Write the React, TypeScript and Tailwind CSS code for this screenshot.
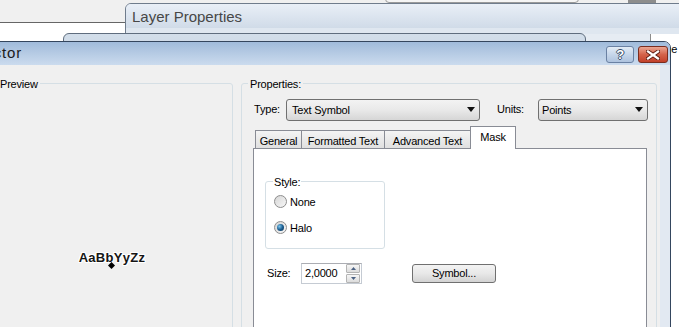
import type { ReactNode } from 'react'

function Combo({ className, children }: { className: string; children: ReactNode }) {
  return (
    <div
      className={`flex h-[22px] items-center rounded-[3px] border border-[#707070] bg-gradient-to-b from-[#f3f3f3] via-[#e9e9e9] to-[#d6d6d6] ${className}`}
    >
      <span className="flex-1 leading-[14px]">{children}</span>
      <svg width="8" height="5" viewBox="0 0 8 5" className="mr-[4px]">
        <path d="M0 0h8L4 5z" fill="#111" />
      </svg>
    </div>
  )
}

function Radio({ checked, label }: { checked?: boolean; label: string }) {
  return (
    <div className="flex h-[16px] items-center">
      <span className="ml-[1px] flex h-[13px] w-[13px] items-center justify-center rounded-full border border-[#8d8d8d] bg-gradient-to-br from-[#d6d6d6] to-[#f7f7f7]">
        {checked && (
          <span className="h-[7px] w-[7px] rounded-full bg-[radial-gradient(circle_at_35%_35%,#7cc6ee,#1d5f92_50%,#0b2f4f)]" />
        )}
      </span>
      <span className="ml-[3px] leading-[14px]">{label}</span>
    </div>
  )
}

function SpinButton({ up }: { up?: boolean }) {
  return (
    <div className="flex h-[9px] items-center justify-center rounded-[1px] border border-[#b4b4b4] bg-gradient-to-b from-[#f6f6f6] to-[#dcdcdc]">
      <svg width="5" height="3" viewBox="0 0 5 3">
        <path d={up ? 'M0 3h5L2.5 0z' : 'M0 0h5L2.5 3z'} fill="#4b6183" />
      </svg>
    </div>
  )
}

export default function App() {
  return (
    <div className="relative h-[327px] w-[679px] overflow-hidden bg-white font-['Liberation_Sans',Arial,sans-serif] text-[11px] tracking-[-0.2px] text-black">
      {/* desktop behind the dialogs */}
      <div className="h-[23px] border-b border-[#666] bg-[#f0f0f0]" />
      <div className="absolute left-[385px] top-[-6px] h-[9px] w-[194px] rounded-b-[4px] border border-[#9a9a9a] bg-[#f5f5f5]" />
      <div className="absolute left-[628px] top-0 h-[3px] w-[28px] bg-[#8d8d8d]" />

      {/* Layer Properties window */}
      <div className="absolute left-[125px] top-[3px] flex h-[340px] w-[600px] flex-col rounded-tl-[6px] border border-[#6f7c8c] bg-[#dfe7f0]">
        <div className="h-[24px] rounded-tl-[5px] bg-gradient-to-b from-[#e9eff7] to-[#d0dbe8] pl-[6px] pt-[4px] text-[15px] leading-[17px] tracking-normal text-[#474747]">
          Layer Properties
        </div>
        <div className="h-[6px] bg-[#dfe7f0]" />
        <div className="flex flex-1">
          <div className="w-[524px] bg-[#e6ecf3]" />
          <div className="flex-1 border-l border-[#8c8c8c] bg-white pl-[3px] pt-[9px] leading-[12px]">Time</div>
        </div>
      </div>

      {/* another window */}
      <div className="absolute left-[63px] top-[33px] h-[40px] w-[523px] rounded-t-[6px] border border-[#5f6d7e] bg-gradient-to-b from-[#d3deea] to-[#c2d1e2]" />

      {/* Symbol Selector dialog */}
      <div className="absolute left-[-20px] top-[41px] flex h-[320px] w-[691px] flex-col rounded-tr-[7px] border border-[#34465e] bg-[#e2e9f2]">
        <div className="flex h-[25px] items-center rounded-tr-[6px] bg-gradient-to-b from-[#a0bbdb] via-[#b6cbe4] to-[#cbdbee]">
          <div className="flex w-[41px] justify-end whitespace-nowrap text-[15px] tracking-[0.8px] text-[#1b1b1b]">
            Symbol Selector
          </div>
          <div className="flex-1" />
          <div className="mr-[2px] flex gap-[4px] self-start pt-[4px]">
            <div className="flex h-[17px] w-[28px] items-center justify-center rounded-[3px] border border-[#6a81a3] bg-gradient-to-b from-[#e3ecf6] via-[#c6d6ea] to-[#aec3de] text-[13px] font-bold leading-[13px] text-white [text-shadow:1px_0_0_#3b4f6b,-1px_0_0_#3b4f6b,0_1px_0_#3b4f6b,0_-1px_0_#3b4f6b]">
              ?
            </div>
            <div className="flex h-[17px] w-[30px] items-center justify-center rounded-[3px] border border-[#7a2d1f] bg-gradient-to-b from-[#eaa592] via-[#d4634a] to-[#c2402a]">
              <svg width="14" height="10" viewBox="0 0 14 10">
                <path d="M2 1.5L12 8.5M12 1.5L2 8.5" stroke="#5a1a10" strokeWidth="4" strokeLinecap="square" />
                <path d="M2 1.5L12 8.5M12 1.5L2 8.5" stroke="#fff" strokeWidth="2.2" strokeLinecap="square" />
              </svg>
            </div>
          </div>
        </div>

        <div className="flex flex-1 pl-[7px] pr-[10px]">
          <div className="flex flex-1 bg-[#f0f0f0] pt-[13px]">
            {/* Preview */}
            <fieldset className="ml-[3px] h-[300px] w-[242px] rounded-[3px] border border-[#d5dfe5] pl-[6px]">
              <legend className="px-[2px] leading-[12px]">Preview</legend>
              <div className="mt-[161px] flex justify-center pr-[6px]">
                <span className="relative text-[13px] font-bold leading-[14px] tracking-[0.3px] text-[#151515] [text-shadow:1px_0_0_#fff,-1px_0_0_#fff,0_1px_0_#fff,0_-1px_0_#fff,1px_1px_0_#fff,-1px_-1px_0_#fff,1px_-1px_0_#fff,-1px_1px_0_#fff]">
                  AaBbYyZz
                  <svg width="7" height="7" viewBox="0 0 7 7" className="absolute left-1/2 top-[11px] -ml-[4px]">
                    <path d="M3.5 0L7 3.5L3.5 7L0 3.5z" fill="#000" />
                  </svg>
                </span>
              </div>
            </fieldset>

            {/* Properties */}
            <fieldset className="ml-[8px] h-[300px] w-[416px] rounded-[3px] border border-[#d5dfe5] pl-[6px]">
              <legend className="px-[2px] leading-[12px]">Properties:</legend>
              <div className="ml-[6px] mt-[9px] flex h-[22px] items-center">
                <span className="w-[32px]">Type:</span>
                <Combo className="w-[194px] pl-[5px]">Text Symbol</Combo>
                <span className="ml-[17px] w-[41px]">Units:</span>
                <Combo className="w-[110px] pl-[3px]">Points</Combo>
              </div>

              <div className="ml-[5px] mt-[5px]">
                <div className="flex h-[22px] items-end pl-[2px]">
                  <div className="flex h-[18px] w-[47px] justify-center border border-b-0 border-[#898c95] bg-gradient-to-b from-[#f4f4f4] to-[#e0e0e0] pt-[4px] leading-[13px]">
                    General
                  </div>
                  <div className="flex h-[18px] w-[83px] justify-center border border-b-0 border-l-0 border-[#898c95] bg-gradient-to-b from-[#f4f4f4] to-[#e0e0e0] pt-[4px] leading-[13px]">
                    Formatted Text
                  </div>
                  <div className="flex h-[18px] w-[86px] justify-center border border-b-0 border-l-0 border-[#898c95] bg-gradient-to-b from-[#f4f4f4] to-[#e0e0e0] pt-[4px] leading-[13px]">
                    Advanced Text
                  </div>
                  <div className="relative z-10 -mb-px -ml-px flex h-[23px] w-[46px] justify-center border border-b-0 border-[#898c95] bg-white pt-[4px] leading-[13px]">
                    Mask
                  </div>
                </div>

                <div className="h-[200px] w-[394px] border border-[#898c95] bg-white">
                  <fieldset className="ml-[11px] mt-[27px] w-[120px] rounded-[3px] border border-[#d5dfe5] pb-[12px] pl-[7px]">
                    <legend className="px-[1px] leading-[12px]">Style:</legend>
                    <div className="mt-[6px]">
                      <Radio label="None" />
                    </div>
                    <div className="mt-[10px]">
                      <Radio checked label="Halo" />
                    </div>
                  </fieldset>

                  <div className="ml-[13px] mt-[14px] flex h-[21px] items-center">
                    <span className="w-[34px]">Size:</span>
                    <div className="flex h-[21px] w-[61px] items-center border border-[#c5cbd3] border-t-[#abadb3]">
                      <span className="flex-1 pl-[3px] leading-[14px]">2,0000</span>
                      <div className="mr-[1px] flex w-[14px] flex-col gap-px">
                        <SpinButton up />
                        <SpinButton />
                      </div>
                    </div>
                    <div className="ml-[50px] flex h-[19px] w-[84px] items-center justify-center rounded-[3px] border border-[#707070] bg-gradient-to-b from-[#f3f3f3] via-[#e8e8e8] to-[#d3d3d3] leading-[13px]">
                      Symbol...
                    </div>
                  </div>
                </div>
              </div>
            </fieldset>
          </div>
        </div>
      </div>
    </div>
  )
}
